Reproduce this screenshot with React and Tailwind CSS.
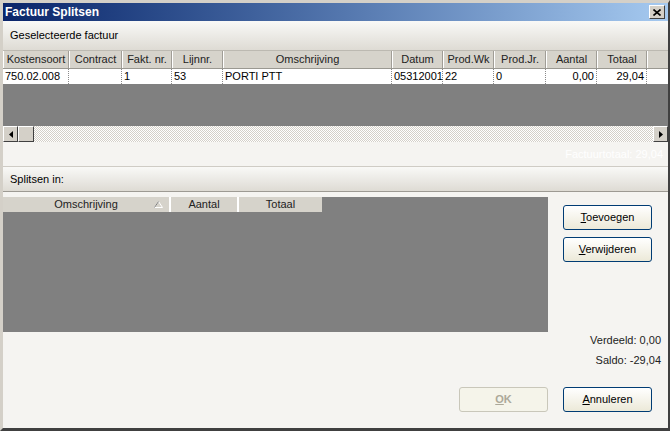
import React from 'react';

const font = "font-['Liberation_Sans',Arial,sans-serif]";

// columns of the selected invoice grid
const topCols = [
  { label: 'Kostensoort', w: 'w-[66px]', value: '750.02.008', align: 'text-left' },
  { label: 'Contract', w: 'w-[53px]', value: '', align: 'text-left' },
  { label: 'Fakt. nr.', w: 'w-[50px]', value: '1', align: 'text-left' },
  { label: 'Lijnnr.', w: 'w-[51px]', value: '53', align: 'text-left' },
  { label: 'Omschrijving', w: 'w-[169px]', value: 'PORTI PTT', align: 'text-left' },
  { label: 'Datum', w: 'w-[51px]', value: '05312001', align: 'text-left' },
  { label: 'Prod.Wk', w: 'w-[51px]', value: '22', align: 'text-left' },
  { label: 'Prod.Jr.', w: 'w-[52px]', value: '0', align: 'text-left' },
  { label: 'Aantal', w: 'w-[51px]', value: '0,00', align: 'text-right' },
  { label: 'Totaal', w: 'w-[50px]', value: '29,04', align: 'text-right' },
];

const Button = ({ children, disabled }) => (
  <button
    className={`w-[89px] h-[25px] rounded-[3px] border text-[11px] ${
      disabled
        ? 'border-[#c9c7ba] bg-[#f5f4ea] text-[#aca899] font-bold'
        : 'border-[#003c74] bg-gradient-to-b from-white to-[#ece9d8] text-black'
    }`}
  >
    {children}
  </button>
);

const ScrollBtn = ({ dir }) => (
  <div className="w-[15px] h-[16px] bg-[#d4d0c8] border border-t-white border-l-white border-r-[#404040] border-b-[#404040] flex items-center justify-center">
    <svg width="4" height="7" viewBox="0 0 4 7">
      {dir === 'left' ? <path d="M4 0 L0 3.5 L4 7 Z" fill="#000" /> : <path d="M0 0 L4 3.5 L0 7 Z" fill="#000" />}
    </svg>
  </div>
);

export default function App() {
  return (
    <div className={`w-[670px] h-[431px] flex flex-col bg-[#d4d0c8] border-t-[3px] border-l-[3px] border-r-2 border-b-[3px] border-t-[#d4d0c8] border-l-[#d4d0c8] border-r-[#404040] border-b-[#404040] overflow-hidden ${font}`}>
      {/* Title bar */}
      <div className="h-[18px] shrink-0 flex items-center justify-between bg-gradient-to-r from-[#0a246a] to-[#a6caf0] pl-[2px] pr-[3px]">
        <span className="text-white font-bold text-[12px] leading-none">Factuur Splitsen</span>
        <div className="w-[16px] h-[14px] bg-[#d4d0c8] border border-t-white border-l-white border-r-[#404040] border-b-[#404040] flex items-center justify-center">
          <svg width="8" height="7" viewBox="0 0 8 7">
            <path d="M0.5 0.5 L7.5 6.5 M7.5 0.5 L0.5 6.5" stroke="#000" strokeWidth="1.6" />
          </svg>
        </div>
      </div>

      <div className="flex-1 flex flex-col bg-[#f5f4f1] text-[11px] text-black">
        {/* Selected invoice header */}
        <div className="h-[30px] shrink-0 flex items-center pl-[7px] bg-gradient-to-b from-[#f9f9f7] to-[#dedbd4] border-b border-[#bcb9b1]">
          Geselecteerde factuur
        </div>

        {/* Upper grid */}
        <div className="flex h-[17px] shrink-0 bg-[#d6d3cb]">
          {topCols.map((c) => (
            <div key={c.label} className={`${c.w} shrink-0 border-l border-l-white border-r border-r-[#a09d96] text-center leading-[16px] text-[#222]`}>
              {c.label}
            </div>
          ))}
          <div className="flex-1 border-l border-l-white" />
        </div>
        <div className="flex h-[16px] shrink-0 bg-white border-t border-[#9a9891]">
          {topCols.map((c) => (
            <div key={c.label} className={`${c.w} shrink-0 border-r border-dotted border-[#8a8a8a] px-[2px] leading-[15px] ${c.align}`}>
              {c.value}
            </div>
          ))}
          <div className="flex-1" />
        </div>
        <div className="h-[42px] shrink-0 bg-[#808080]" />

        {/* Horizontal scrollbar */}
        <div className="flex h-[16px] shrink-0 bg-[repeating-conic-gradient(#d4d0c8_0_25%,#ffffff_0_50%)] bg-[length:2px_2px]">
          <ScrollBtn dir="left" />
          <div className="w-[16px] h-[16px] bg-[#d4d0c8] border border-t-white border-l-white border-r-[#404040] border-b-[#404040]" />
          <div className="flex-1" />
          <ScrollBtn dir="right" />
        </div>

        <div className="h-[24px] shrink-0 flex items-center justify-end pr-[5px] text-white text-[11px]">
          Factuurtotaal: 29,04
        </div>

        {/* Split section header */}
        <div className="h-[26px] shrink-0 flex items-center pl-[7px] bg-gradient-to-b from-[#f9f9f7] to-[#dedbd4] border-t border-t-[#cfccc5] border-b border-b-[#9d9a93]">
          Splitsen in:
        </div>

        <div className="flex-1 flex flex-col pt-[5px]">
          <div className="flex">
            <div className="w-[545px] h-[135px] bg-[#808080] flex flex-col">
              <div className="flex h-[15px] text-[#222]">
                <div className="w-[168px] bg-[#d6d3cb] border-r-2 border-r-white flex items-center justify-center relative leading-[15px]">
                  Omschrijving
                  <svg className="absolute right-[6px] top-[4px]" width="9" height="7" viewBox="0 0 9 7">
                    <path d="M4.5 0.5 L8.5 6.5 L0.5 6.5 Z" fill="none" stroke="#ffffff" strokeWidth="1" />
                    <path d="M4.5 0.5 L0.5 6.5" stroke="#808080" strokeWidth="1" />
                  </svg>
                </div>
                <div className="w-[68px] bg-[#d6d3cb] border-r-2 border-r-white text-center leading-[15px]">Aantal</div>
                <div className="w-[83px] bg-[#d6d3cb] text-center leading-[15px]">Totaal</div>
              </div>
            </div>
            <div className="flex flex-col gap-[7px] ml-[15px] mt-[8px]">
              <Button><span className="underline">T</span>oevoegen</Button>
              <Button><span className="underline">V</span>erwijderen</Button>
            </div>
          </div>

          <div className="flex flex-col items-end pr-[7px] mt-[-2px] leading-[20px] text-[#222]">
            <span>Verdeeld: 0,00</span>
            <span>Saldo: -29,04</span>
          </div>

          <div className="flex justify-end gap-[15px] pr-[16px] mt-[17px]">
            <Button disabled><span className="underline">O</span>K</Button>
            <Button><span className="underline">A</span>nnuleren</Button>
          </div>
        </div>
      </div>
    </div>
  );
}
